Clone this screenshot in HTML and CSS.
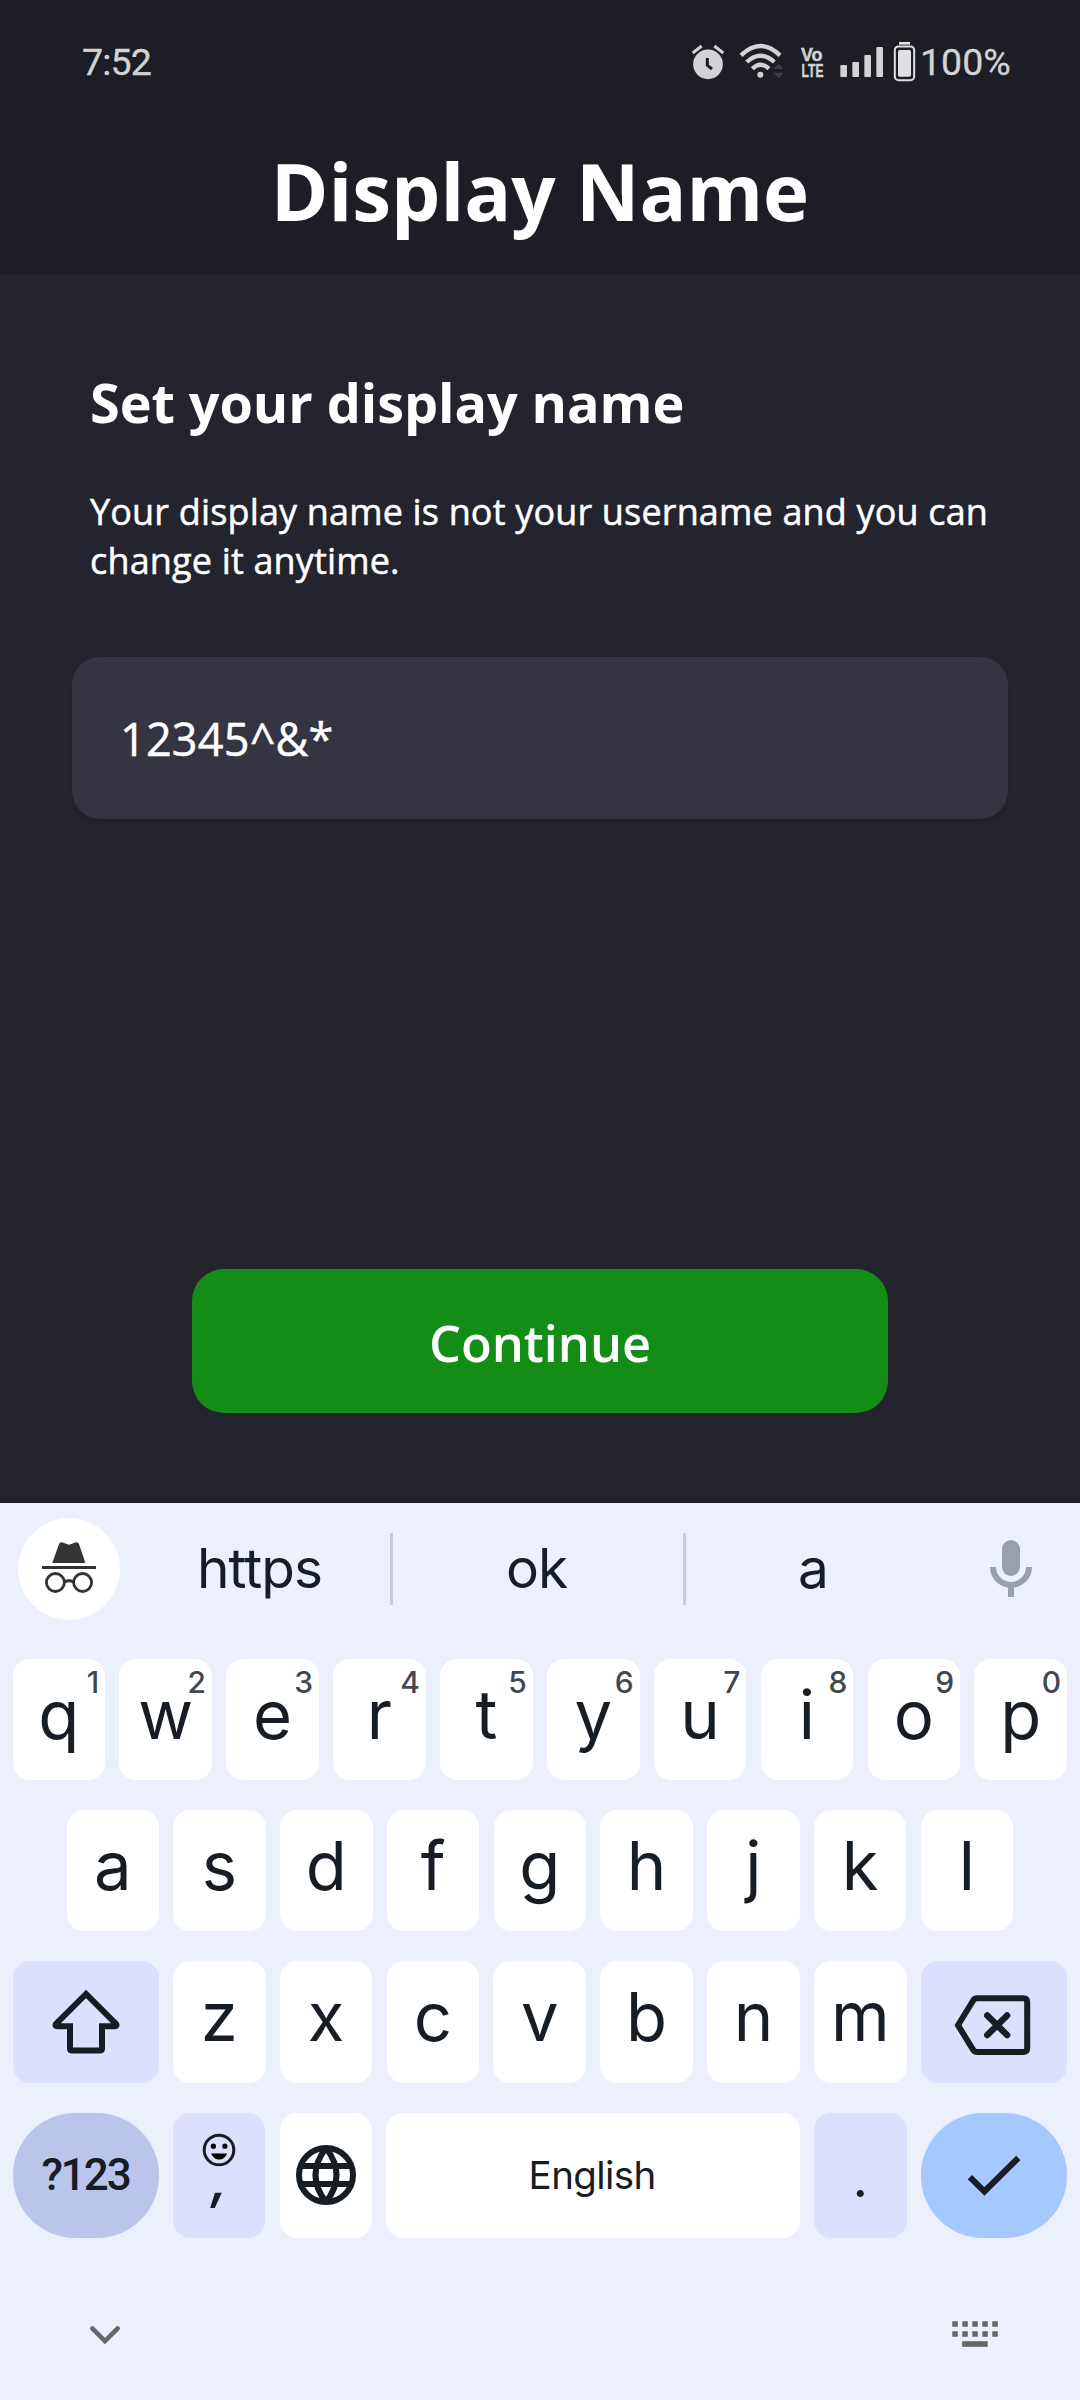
FILE: index.html
```html
<!DOCTYPE html>
<html lang="en">
<head>
<meta charset="utf-8">
<title>Display Name</title>
<link rel="stylesheet" href="styles.css">
</head>
<body>
<header class="top">
  <div class="status">
    <span class="time">7:52</span>
    <div class="icons">
      <svg width="40" height="42" viewBox="90 60 120 126"><circle cx="144" cy="133" r="44.500" fill="#d3d3d5"/><path d="M98 99L125 78M190 99L163 78" stroke="#d3d3d5" stroke-width="9"/><path d="M142 114V136L156 147" fill="none" stroke="#1d1d25" stroke-width="9"/></svg>
      <svg class="wifi" width="48" height="42" viewBox="234 60 144 126"><g fill="none" stroke="#d3d3d5" stroke-width="13"><path d="M243 106Q301 50 360 106"/><path d="M260 126Q301 88 343 126"/><path d="M277 146Q301 122 327 146"/></g><circle cx="301" cy="164" r="9" fill="#d3d3d5"/><path d="M340 147L356 132L372 147ZM340 158L356 174L372 158Z" fill="#3e3e46"/></svg>
      <svg class="volte" width="25" height="42" viewBox="0 0 25 42"><g fill="#d3d3d5" stroke="#d3d3d5" stroke-width=".5" font-family="Liberation Sans" font-weight="700" font-size="19"><text x="1" y="21" textLength="21.500" lengthAdjust="spacingAndGlyphs">Vo</text><text x="1.500" y="36.700" textLength="22" lengthAdjust="spacingAndGlyphs">LTE</text></g></svg>
      <svg class="signal" width="47" height="42" viewBox="534 60 141 126"><g fill="#d3d3d5"><rect x="541" y="135" width="20" height="36" rx="3"/><rect x="577" y="126" width="20" height="45" rx="3"/><rect x="613" y="105" width="20" height="66" rx="3"/><rect x="649" y="81" width="20" height="90" rx="3"/></g></svg>
      <svg class="battery" width="23" height="42" viewBox="699 60 69 126"><rect x="717" y="66" width="33" height="8" fill="#e0e0e2"/><rect x="704.500" y="79.500" width="58" height="101" rx="11" fill="none" stroke="#e0e0e2" stroke-width="6"/><rect x="714" y="90" width="39" height="80" rx="5" fill="#e0e0e2"/></svg>
      <span class="pct">100%</span>
    </div>
  </div>
  <h1>Display Name</h1>
</header>
<main>
  <h2>Set your display name</h2>
  <p>Your display name is not your username and you can change it anytime.</p>
  <div class="field"><span>12345^&amp;*</span></div>
  <button class="continue">Continue</button>
</main>
<section class="keyboard">
  <div class="suggest">
    <div class="incog"><svg width="102" height="102" viewBox="18 1518 102 102"><g fill="#333"><path d="M52.300 1563L59 1544Q60 1541.800 62.500 1542.400L69 1544.800L75.500 1542.400Q78 1541.800 79 1544L85.400 1563Z"/><rect x="42" y="1566" width="54" height="3"/></g><g fill="none" stroke="#333" stroke-width="2.800"><circle cx="55.400" cy="1582.500" r="9"/><circle cx="82.600" cy="1582.500" r="9"/><path d="M64.500 1582Q69 1579.500 73.500 1582"/></g></svg></div>
    <span class="word w1">https</span><i></i><span class="word">ok</span><i></i><span class="word w3">a</span>
    <svg class="mic" width="44" height="60" viewBox="989 1538 44 60"><rect x="1002" y="1539" width="18" height="36" rx="9" fill="#9aa0ab"/><path d="M993 1566A18 18 0 0 0 1029 1566M1011 1584V1596" fill="none" stroke="#9aa0ab" stroke-width="6"/></svg>
  </div>
  <div class="row"><b>q<sup>1</sup></b><b>w<sup>2</sup></b><b>e<sup>3</sup></b><b>r<sup>4</sup></b><b>t<sup>5</sup></b><b>y<sup>6</sup></b><b>u<sup>7</sup></b><b>i<sup>8</sup></b><b>o<sup>9</sup></b><b>p<sup>0</sup></b></div>
  <div class="row mid"><b>a</b><b>s</b><b>d</b><b>f</b><b>g</b><b>h</b><b>j</b><b>k</b><b>l</b></div>
  <div class="row third">
    <b class="wide tint"><svg width="146" height="122" viewBox="13 1961 146 122"><path d="M86 1994L56 2024Q54.500 2026.300 57.500 2026.300H70V2048.500Q70 2050.500 72 2050.500H100Q102 2050.500 102 2048.500V2026.300H114.500Q117.500 2026.300 116 2024Z" fill="none" stroke="#161d25" stroke-width="6"/></svg></b>
    <b>z</b><b>x</b><b>c</b><b>v</b><b>b</b><b>n</b><b>m</b>
    <b class="wide tint"><svg width="146" height="122" viewBox="920.500 1961 146 122"><path d="M957.500 2025.200L972.800 2000.300Q974.200 1998.300 976.500 1998.300H1022.700Q1026.700 1998.300 1026.700 2002.300V2048Q1026.700 2052 1022.700 2052H976.500Q974.200 2052 972.800 2050Z" fill="none" stroke="#161d25" stroke-width="6"/><path d="M986.800 2015.500L1006.600 2035M1006.600 2015.500L986.800 2035" stroke="#161d25" stroke-width="6.500" stroke-linecap="round"/></svg></b>
  </div>
  <div class="row fourth">
    <b class="wide sym">?123</b>
    <b class="tint comma"><svg width="36" height="36" viewBox="200.300 2132.300 36 36"><circle cx="218.300" cy="2150.300" r="14.800" fill="none" stroke="#161d25" stroke-width="3"/><circle cx="212.700" cy="2146.500" r="2.600"/><circle cx="224.200" cy="2146.500" r="2.600"/><path d="M210.400 2153.700H226.400Q224 2159.700 218.400 2159.700T210.400 2153.700Z"/></svg><span>,</span></b>
    <b><svg width="92" height="125" viewBox="279 2113 92 125"><g fill="none" stroke="#161d25" stroke-width="6" stroke-linejoin="bevel"><circle cx="325" cy="2175" r="27"/><path d="M300 2166H350M300 2184H350M325 2148Q304 2175 325 2202Q346 2175 325 2148Z"/></g></svg></b>
    <b class="space">English</b>
    <b class="tint dot"><span>.</span></b>
    <b class="wide enter"><svg width="146" height="125" viewBox="920.500 2113 146 125"><path d="M969.400 2177.200L983.900 2191.500L1017.800 2158" fill="none" stroke="#161d25" stroke-width="6"/></svg></b>
  </div>
  <nav>
    <svg width="34" height="24" viewBox="88 2323 34 24"><path d="M92.300 2328.300L105 2341L117.700 2328.300" fill="none" stroke="#666" stroke-width="4.500" stroke-linecap="round"/></svg>
    <svg width="48" height="30" viewBox="951 2320 48 30"><path d="M952.300 2324H998M952.300 2334H998" stroke="#666" stroke-width="5.500" stroke-dasharray="5.500 4.500"/><rect x="962.200" y="2341.200" width="25.500" height="5.600" fill="#666"/></svg>
  </nav>
</section>
</body>
</html>
```
FILE: styles.css
```css
* { box-sizing: border-box; }
body { margin: 0; width: 1080px; height: 2400px; background: #24242e; color: #fff; font-family: "Open Sans", sans-serif; overflow: hidden; display: flex; flex-direction: column; }
svg { display: block; flex: none; }
.top { height: 275px; flex: none; background: #1d1d25; }
.status { height: 120px; display: flex; justify-content: space-between; padding: 40px 68px 0 82px; font: 400 37.500px/44px Roboto, sans-serif; color: #d3d3d5; -webkit-text-stroke: .3px; }
.time { letter-spacing: -.8px; }
.icons { display: flex; }
.wifi { margin-left: 8px; }
.volte { margin-left: 14px; overflow: visible; }
.signal { margin-left: 13px; }
.battery { margin-left: 8px; }
.pct { margin-left: 4px; width: 92px; white-space: nowrap; }
h1 { margin: 0; text-align: center; font-size: 78px; line-height: 142px; font-weight: 700; }
main { height: 1228px; flex: none; display: flex; flex-direction: column; align-items: center; }
h2 { margin: 90px 90px 0; align-self: flex-start; font-size: 54px; line-height: 74px; font-weight: 700; letter-spacing: -.07px; }
p { margin: 48px 90px 0; align-self: flex-start; width: 905px; font-size: 36px; line-height: 49px; letter-spacing: .16px; -webkit-text-stroke: .5px #fff; }
.field { margin-top: 72px; width: 936px; height: 162px; border-radius: 28px; background: #353541; padding-left: 48px; font-size: 45px; line-height: 163px; letter-spacing: .2px; -webkit-text-stroke: .5px #fff; box-shadow: 0 3px 5px rgba(0,0,0,.12); }
.continue { margin-top: 450px; width: 696px; height: 144px; border: 0; border-radius: 32px; background: #138d16; color: #fff; font: 600 50.500px/144px "Open Sans", sans-serif; padding: 2px 0 0; }
.keyboard { height: 897px; flex: none; background: #ecf0fd; color: #161d25; font-family: Inter, sans-serif; padding: 0 13px 0 12.500px; box-shadow: 0 -2px 3px rgba(0,0,0,.15); }
.suggest { height: 132px; margin-bottom: 24px; display: flex; align-items: center; padding-left: 5.500px; }
.incog { width: 102px; height: 102px; border-radius: 50%; background: #fff; }
.word { width: 290px; text-align: center; font-size: 55px; line-height: 66px; letter-spacing: -1px; padding: 0 3px 2px 0; }
.w1 { width: 270px; padding: 0 0 2px 9px; }
.w3 { width: 257px; }
.suggest i { width: 3px; height: 72px; background: #c8ccd9; }
.mic { margin-left: 46px; }
.row { display: flex; gap: 14.200px; height: 121px; margin-bottom: 30px; }
.row.mid { padding: 0 54px; }
.row.third { height: 122px; }
.row.fourth { height: 125px; }
.row b { flex: 1 1 0; position: relative; background: #fff; border-radius: 17px; font-size: 67px; line-height: 111px; font-weight: 400; text-align: center; display: flex; justify-content: center; }
.row b.wide { flex: 0 0 146.200px; }
.row b.tint { background: #dce0ff; }
.row sup { position: absolute; right: 6px; top: 5px; font-size: 30px; line-height: 36px; font-weight: 500; color: #43474e; }
.row b.sym { background: #bbc5eb; border-radius: 62px; font: 500 44px/124px Roboto, sans-serif; letter-spacing: -2px; }
.row b.enter { background: #a5c8ff; border-radius: 62px; }
.row b.space { flex: 0 0 413.500px; font-size: 38.500px; line-height: 124px; letter-spacing: -.6px; padding-right: 2px; }
.row b.comma { flex-direction: column; align-items: center; justify-content: flex-start; padding-top: 19px; }
.comma span { font-size: 52px; line-height: 50px; margin-top: -13px; font-weight: 600; font-style: italic; }
.dot span { font-size: 54px; line-height: 130px; }
nav { display: flex; justify-content: space-between; align-items: center; padding: 0 68px 0 75.500px; height: 134px; }
```
